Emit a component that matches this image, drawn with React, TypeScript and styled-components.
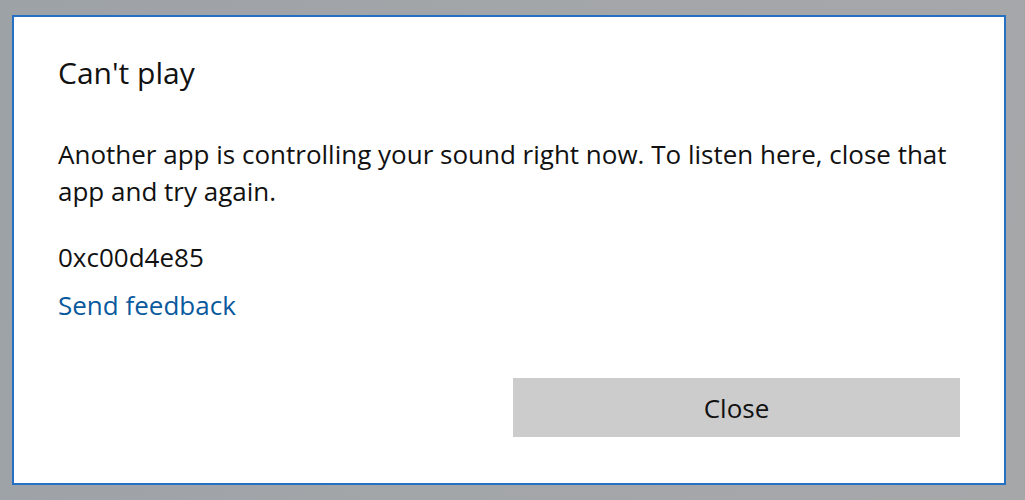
import React from "react";
import styled, { createGlobalStyle } from "styled-components";

const GlobalStyle = createGlobalStyle`
  html, body {
    margin: 0;
    padding: 0;
    width: 1025px;
    height: 500px;
    overflow: hidden;
  }
  body {
    font-family: "Open Sans", "Noto Sans", sans-serif;
    background: linear-gradient(100deg, #9da2a7 0%, #a3a6a9 50%, #a6a7a9 100%);
  }
`;

const Backdrop = styled.div`
  width: 1025px;
  height: 500px;
  box-sizing: border-box;
  padding: 15px 0 0 12px;
`;

const Dialog = styled.div`
  width: 994px;
  height: 470px;
  box-sizing: border-box;
  border: 2px solid #2570c2;
  background: #ffffff;
  display: flex;
  flex-direction: column;
  padding: 36px 44px 46px 44px;
`;

const Title = styled.h1`
  margin: 0;
  font-size: 30px;
  line-height: 40px;
  font-weight: 400;
  color: #111;
`;

const Message = styled.p`
  margin: 43px 0 0 0;
  font-size: 26px;
  line-height: 37px;
  color: #111;
`;

const Code = styled.p`
  margin: 29px 0 0 0;
  font-size: 26px;
  line-height: 37px;
  color: #111;
`;

const Link = styled.a`
  margin-top: 11px;
  font-size: 26px;
  line-height: 37px;
  color: #0a5a9d;
  text-decoration: none;
  align-self: flex-start;
`;

const Footer = styled.div`
  margin-top: auto;
  display: flex;
  justify-content: flex-end;
`;

const Button = styled.button`
  width: 447px;
  height: 59px;
  border: none;
  background: #cccccc;
  font-family: inherit;
  font-size: 26px;
  color: #111;
  padding: 0;
`;

export default function App() {
  return (
    <>
      <GlobalStyle />
      <Backdrop>
        <Dialog>
          <Title>Can't play</Title>
          <Message>
            Another app is controlling your sound right now. To listen here, close that app and try again.
          </Message>
          <Code>0xc00d4e85</Code>
          <Link href="#">Send feedback</Link>
          <Footer>
            <Button>Close</Button>
          </Footer>
        </Dialog>
      </Backdrop>
    </>
  );
}
